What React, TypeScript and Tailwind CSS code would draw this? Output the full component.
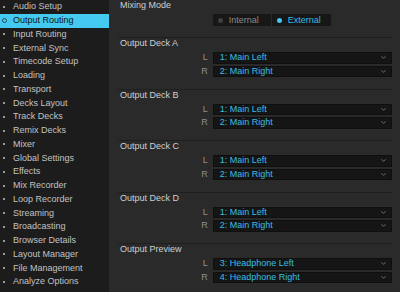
import { ChevronDown } from "lucide-react";

const menu = [
  "Audio Setup",
  "Output Routing",
  "Input Routing",
  "External Sync",
  "Timecode Setup",
  "Loading",
  "Transport",
  "Decks Layout",
  "Track Decks",
  "Remix Decks",
  "Mixer",
  "Global Settings",
  "Effects",
  "Mix Recorder",
  "Loop Recorder",
  "Streaming",
  "Broadcasting",
  "Browser Details",
  "Layout Manager",
  "File Management",
  "Analyze Options",
];

const decks = [
  { title: "Output Deck A", l: "1: Main Left", r: "2: Main Right" },
  { title: "Output Deck B", l: "1: Main Left", r: "2: Main Right" },
  { title: "Output Deck C", l: "1: Main Left", r: "2: Main Right" },
  { title: "Output Deck D", l: "1: Main Left", r: "2: Main Right" },
  { title: "Output Preview", l: "3: Headphone Left", r: "4: Headphone Right" },
];

const Sidebar = () => (
  <div className="w-[109px] shrink-0 bg-[#1c1c1c] pt-[-1px]">
    {menu.map((item) => {
      const active = item === "Output Routing";
      return (
        <div
          key={item}
          className={`flex h-[13.75px] items-center ${
            active ? "bg-[#44caf0] text-[#121212]" : "text-[#c2c2c2]"
          }`}
        >
          <div className="flex w-[13px] justify-center pr-[5px]">
            {active ? (
              <span className="block h-[5px] w-[5px] rounded-full border border-[#2a4a55]" />
            ) : (
              <span className="block h-[2px] w-[2px] bg-[#9a9a9a]" />
            )}
          </div>
          <span className="text-[9px] leading-none">{item}</span>
        </div>
      );
    })}
  </div>
);

const Select = ({ label, value }: { label: string; value: string }) => (
  <div className="flex h-[11.5px] items-center">
    <div className="w-[94.7px] pr-[5px] text-right text-[9px] leading-none text-[#8e8e8e]">
      {label}
    </div>
    <div className="flex h-full w-[179px] items-center justify-between border border-[#0f0f0f] bg-[#151515] pl-[6px] pr-[4px]">
      <span className="text-[9px] leading-none text-[#38bde4]">{value}</span>
      <ChevronDown className="h-[7px] w-[7px] text-[#7a7a7a]" strokeWidth={3} />
    </div>
  </div>
);

export default function App() {
  return (
    <div
      className="flex h-[292px] w-[400px] overflow-hidden bg-[#2a2a2a]"
      style={{ fontFamily: '"Liberation Sans", Arial, sans-serif' }}
    >
      <Sidebar />
      <div className="flex-1 pl-[9px] pr-[8px]">
        <div className="h-[37px]">
          <div className="h-[11px] pl-[2px] text-[9px] leading-[11px] text-[#cfcfcf]">
            Mixing Mode
          </div>
          <div className="mt-[3px] flex h-[12px] pl-[94.7px]">
            <div className="flex w-[58px] items-center bg-[#171717]">
              <span className="ml-[5px] h-[5px] w-[5px] rounded-full bg-[#404040]" />
              <span className="ml-[6px] text-[9px] leading-none text-[#8a8a8a]">Internal</span>
            </div>
            <div className="ml-px flex w-[59px] items-center bg-[#171717]">
              <span className="ml-[5px] h-[5px] w-[5px] rounded-full bg-[#3fc9f0]" />
              <span className="ml-[6px] text-[9px] leading-none text-[#38bde4]">External</span>
            </div>
          </div>
        </div>
        {decks.map((d) => (
          <div key={d.title} className="h-[51.5px] border-t border-[#1f1f1f]">
            <div className="h-[11px] pl-[2px] text-[9px] leading-[11px] text-[#cfcfcf]">
              {d.title}
            </div>
            <div className="mt-[3px] flex flex-col gap-[2px]">
              <Select label="L" value={d.l} />
              <Select label="R" value={d.r} />
            </div>
          </div>
        ))}
      </div>
    </div>
  );
}
